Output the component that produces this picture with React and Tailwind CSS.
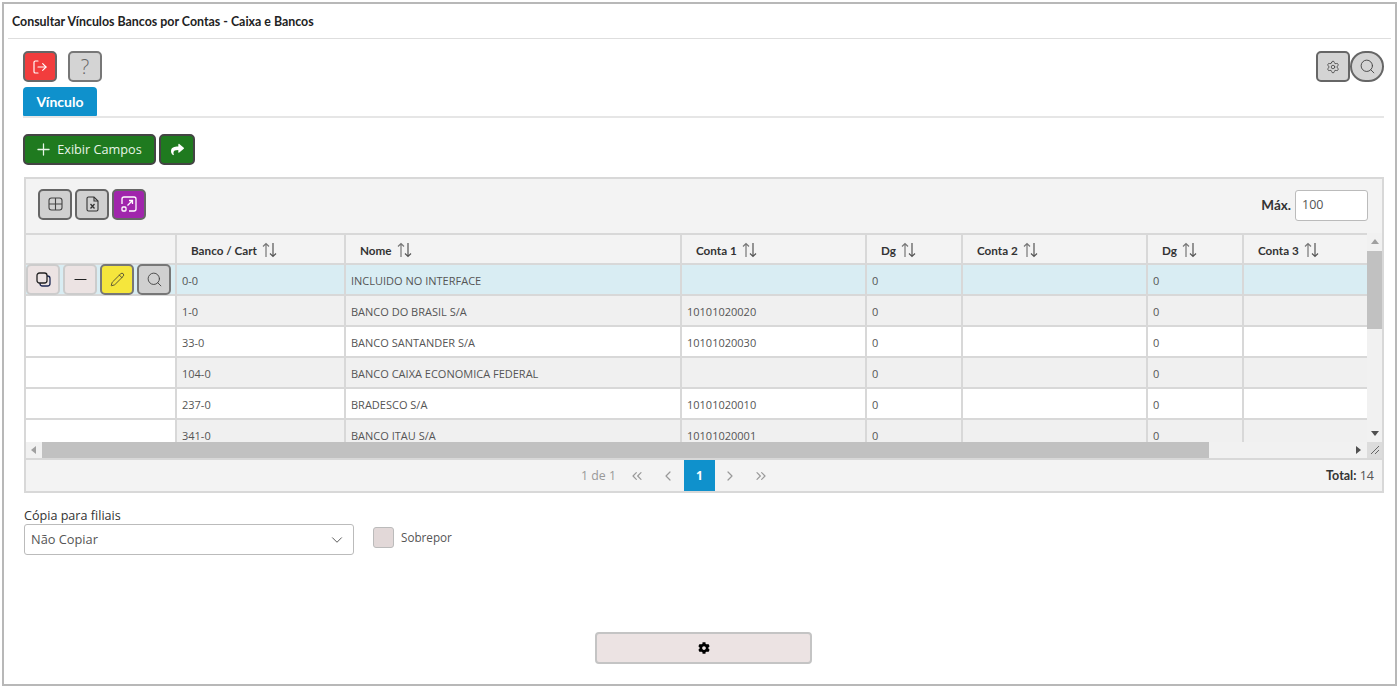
import React from "react";
import { LogOut, Plus, Search, Settings, Pencil, Minus, ChevronDown, ChevronLeft, ChevronRight, ChevronsLeft, ChevronsRight } from "lucide-react";
import { FaShare, FaCog } from "react-icons/fa";

const cols = [
  { label: "", w: "w-[151px]" },
  { label: "Banco / Cart", w: "w-[169px]" },
  { label: "Nome", w: "w-[336px]" },
  { label: "Conta 1", w: "w-[185px]" },
  { label: "Dg", w: "w-[96px]" },
  { label: "Conta 2", w: "w-[185px]" },
  { label: "Dg", w: "w-[96px]" },
  { label: "Conta 3", w: "w-[123px]" },
];

const rows = [
  ["0-0", "INCLUIDO NO INTERFACE", "", "0", "", "0", ""],
  ["1-0", "BANCO DO BRASIL S/A", "10101020020", "0", "", "0", ""],
  ["33-0", "BANCO SANTANDER S/A", "10101020030", "0", "", "0", ""],
  ["104-0", "BANCO CAIXA ECONOMICA FEDERAL", "", "0", "", "0", ""],
  ["237-0", "BRADESCO S/A", "10101020010", "0", "", "0", ""],
  ["341-0", "BANCO ITAU S/A", "10101020001", "0", "", "0", ""],
];

const SortIcon = () => (
  <svg width="15" height="16" viewBox="0 0 15 16" fill="none" stroke="#777" strokeWidth="1.2" className="ml-[5px] shrink-0">
    <path d="M4 15V1.5M1 4.5l3-3 3 3" />
    <path d="M11 1v13.5M8 11.5l3 3 3-3" stroke="#555" />
  </svg>
);

const GridIcon = () => (
  <svg width="15" height="14" viewBox="0 0 15 14" fill="none" stroke="#444" strokeWidth="1.1">
    <rect x="1" y="1" width="13" height="12" rx="2.5" />
    <path d="M1 7h13M7.5 1v12" />
  </svg>
);

const ExcelIcon = () => (
  <svg width="13" height="16" viewBox="0 0 13 16" fill="none" stroke="#333" strokeWidth="1.1">
    <path d="M2.5 1H8l4 4v8.5a1.5 1.5 0 0 1-1.5 1.5h-8A1.5 1.5 0 0 1 1 13.5v-11A1.5 1.5 0 0 1 2.5 1z" />
    <path d="M8 1v4h4" />
    <path d="M4.5 8l4 4.5M8.5 8l-4 4.5" strokeWidth="1.3" />
  </svg>
);

const ExpandIcon = () => (
  <svg width="16" height="16" viewBox="0 0 16 16" fill="none" stroke="#fff" strokeWidth="1.3">
    <path d="M1 8V3a2 2 0 0 1 2-2h10a2 2 0 0 1 2 2v10a2 2 0 0 1-2 2H8" />
    <path d="M6.5 9.5 11.5 4.5M8 4.5h3.5V8" />
    <rect x="1" y="11" width="4" height="4" rx="1" />
  </svg>
);

const CopyIcon = () => (
  <svg width="15" height="15" viewBox="0 0 15 15" fill="none" strokeWidth="1.3">
    <rect x="4" y="4" width="10" height="10" rx="2.5" stroke="#1f2a55" />
    <rect x="1" y="1" width="10" height="10" rx="2.5" stroke="#222" fill="#ece3e3" />
  </svg>
);

const IconBtn = ({ className, children }) => (
  <button className={`flex h-[31px] w-[34px] items-center justify-center rounded-[5px] border-2 ${className}`}>
    {children}
  </button>
);

export default function App() {
  return (
    <div className="h-[688px] w-[1399px] overflow-hidden bg-white pt-[2px] pl-[2px] font-['Open_Sans',sans-serif] text-[11px] text-[#555]">
      <div className="flex h-[684px] w-[1395px] flex-col border-2 border-[#b8b8b8]">
        <div className="mx-[4px] flex h-[35px] items-center border-b border-[#dedede] pl-[4px] pt-[2px] font-['Lato',sans-serif] text-[12.4px] font-bold text-[#222]">
          Consultar Vínculos Bancos por Contas - Caixa e Bancos
        </div>

        <div className="flex justify-between pl-[19px] pr-[11px] pt-[12px]">
          <div className="flex gap-[11px]">
            <IconBtn className="border-[#666] bg-[#f23d3d] text-white"><LogOut size={16} strokeWidth={1.75} /></IconBtn>
            <IconBtn className="border-[#777] bg-[#d4d4d4] text-[#666]"><span className="text-[20px] font-light leading-none">?</span></IconBtn>
          </div>
          <div className="flex">
            <IconBtn className="border-[#666] bg-[#d4d4d4] text-[#444]"><Settings size={14} strokeWidth={1.4} /></IconBtn>
            <button className="flex h-[31px] w-[34px] items-center justify-center rounded-full border-2 border-[#666] bg-[#d4d4d4] text-[#444]"><Search size={17} strokeWidth={1.3} /></button>
          </div>
        </div>

        <div className="ml-[19px] mr-[11px] mt-[5px] border-b-2 border-[#e6e6e6]">
          <div className="flex h-[29px] w-[74px] items-center justify-center rounded-t-[4px] rounded-b-[1px] bg-[#0f91cc] font-['Lato',sans-serif] text-[14px] font-bold text-white">
            Vínculo
          </div>
        </div>

        <div className="ml-[19px] mt-[16px] flex gap-[3px]">
          <button className="flex h-[31px] w-[133px] items-center justify-center gap-[4px] rounded-[5px] border-2 border-[#444] bg-[#1f7a1f] pr-[3px] text-[12.7px] text-[#e8f5e8]">
            <Plus size={19} strokeWidth={1.6} />
            Exibir Campos
          </button>
          <button className="flex h-[31px] w-[36px] items-center justify-center rounded-[5px] border-2 border-[#444] bg-[#1f7a1f] text-white">
            <FaShare size={13} />
          </button>
        </div>

        <div className="ml-[20px] mr-[11px] mt-[12px] flex h-[316px] w-[1360px] flex-col border-2 border-[#d8d8d8] bg-[#f3f3f3]">
          <div className="flex h-[56px] items-center justify-between pb-[2px] pl-[12px] pr-[14px]">
            <div className="flex gap-[3px] pb-[2px]">
              <IconBtn className="border-[#666] bg-[#d0d0d0]"><GridIcon /></IconBtn>
              <IconBtn className="border-[#666] bg-[#d0d0d0]"><ExcelIcon /></IconBtn>
              <IconBtn className="border-[#666] bg-[#a025ac]"><ExpandIcon /></IconBtn>
            </div>
            <div className="flex items-center gap-[4px]">
              <span className="font-['Lato',sans-serif] text-[13.5px] font-bold text-[#333]">Máx.</span>
              <div className="flex h-[31px] w-[73px] items-center rounded-[3px] border border-[#bbb] bg-white pl-[6px] text-[12.5px] text-[#555]">100</div>
            </div>
          </div>

          <div className="flex h-[209px]">
            <div className="w-[1341px] overflow-hidden">
              <div className="flex h-[32px] border-y-2 border-[#d8d8d8] bg-[#f3f3f3]">
                {cols.map((c, i) => (
                  <div key={i} className={`flex items-center border-r-2 border-[#d8d8d8] pl-[14px] pt-[2px] font-['Lato',sans-serif] text-[11.7px] font-bold text-[#333] last:border-r-0 ${c.w}`}>
                    {c.label}
                    {c.label && <SortIcon />}
                  </div>
                ))}
              </div>
              {rows.map((r, i) => (
                <div key={i} className={`flex h-[31px] border-b-2 border-[#d8d8d8] ${i === 0 ? "bg-[#d9edf3]" : i % 2 ? "bg-[#f0f0f0]" : "bg-white"}`}>
                  <div className={`flex w-[151px] items-center gap-[3px] border-r-2 border-[#d8d8d8] ${i === 0 ? "" : "bg-white"}`}>
                    {i === 0 && (
                      <>
                        <IconBtn className="border-[#ccc] bg-[#ece3e3]"><CopyIcon /></IconBtn>
                        <IconBtn className="border-[#ccc] bg-[#ece3e3] text-[#222]"><Minus size={19} strokeWidth={1.4} /></IconBtn>
                        <IconBtn className="border-[#777] bg-[#f5e63c] text-[#333]"><Pencil size={15} strokeWidth={1.25} /></IconBtn>
                        <IconBtn className="border-[#777] bg-[#d0d0d0] text-[#444]"><Search size={17} strokeWidth={1.3} /></IconBtn>
                      </>
                    )}
                  </div>
                  {r.map((v, j) => (
                    <div key={j} className={`flex items-center border-r-2 border-[#d8d8d8] pl-[5px] pt-[3px] last:border-r-0 ${cols[j + 1].w}`}>
                      {v}
                    </div>
                  ))}
                </div>
              ))}
            </div>
            <div className="flex w-[15px] flex-col items-center bg-[#f1f1f1]">
              <div className="mt-[6px] h-0 w-0 border-x-[4px] border-b-[5px] border-x-transparent border-b-[#a0a0a0]" />
              <div className="mt-[7px] h-[78px] w-full bg-[#c1c1c1]" />
              <div className="mt-auto mb-[6px] h-0 w-0 border-x-[4px] border-t-[5px] border-x-transparent border-t-[#505050]" />
            </div>
          </div>

          <div className="flex h-[16px] items-center bg-[#f1f1f1]">
            <div className="ml-[5px] h-0 w-0 border-y-[4px] border-r-[5px] border-y-transparent border-r-[#a0a0a0]" />
            <div className="ml-[6px] h-full w-[1167px] bg-[#c1c1c1]" />
            <div className="ml-auto mr-[6px] h-0 w-0 border-y-[4px] border-l-[5px] border-y-transparent border-l-[#505050]" />
            <div className="flex h-full w-[15px] items-center justify-center bg-[#dcdcdc]">
              <svg width="10" height="10" viewBox="0 0 10 10" stroke="#666" strokeWidth="1"><path d="M1 9 9 1M5 9l4-4" /></svg>
            </div>
          </div>

          <div className="relative flex flex-1 items-center justify-center border-t-2 border-[#d8d8d8] pr-[50px] text-[#999]">
            <span className="mr-[6px] pt-[2px] text-[12.3px]">1 de 1</span>
            <span className="flex h-[31px] w-[31px] items-center justify-center"><ChevronsLeft size={16} strokeWidth={1.8} /></span>
            <span className="flex h-[31px] w-[31px] items-center justify-center"><ChevronLeft size={16} strokeWidth={1.8} /></span>
            <span className="flex h-[31px] w-[31px] items-center justify-center bg-[#0f91cc] text-[12px] font-bold text-white">1</span>
            <span className="flex h-[31px] w-[31px] items-center justify-center"><ChevronRight size={16} strokeWidth={1.8} /></span>
            <span className="flex h-[31px] w-[31px] items-center justify-center"><ChevronsRight size={16} strokeWidth={1.8} /></span>
            <span className="absolute right-[8px] pt-[2px] text-[12.5px] text-[#555]"><b className="font-['Lato',sans-serif] text-[#333]">Total:</b> 14</span>
          </div>
        </div>

        <div className="ml-[20px] mt-[15px] flex items-end">
          <div>
            <div className="text-[12.6px] leading-[16px] text-[#333]">Cópia para filiais</div>
            <div className="flex h-[31px] w-[330px] items-center justify-between rounded-[3px] border border-[#bbb] bg-white pl-[6px] pr-[7px] text-[12.8px] text-[#555]">
              Não Copiar
              <ChevronDown size={18} strokeWidth={1.3} />
            </div>
          </div>
          <div className="ml-[19px] mb-[7px] flex items-center gap-[7px]">
            <div className="h-[21px] w-[21px] rounded-[3px] border border-[#bbb] bg-[#e2d8d8]" />
            <span className="text-[11.7px] text-[#555]">Sobrepor</span>
          </div>
        </div>

        <div className="mt-[77px] flex justify-center pl-[8px]">
          <button className="flex h-[32px] w-[217px] items-center justify-center rounded-[4px] border-2 border-[#c4c4c4] bg-[#ece3e3] text-black">
            <FaCog size={12} />
          </button>
        </div>
      </div>
    </div>
  );
}
